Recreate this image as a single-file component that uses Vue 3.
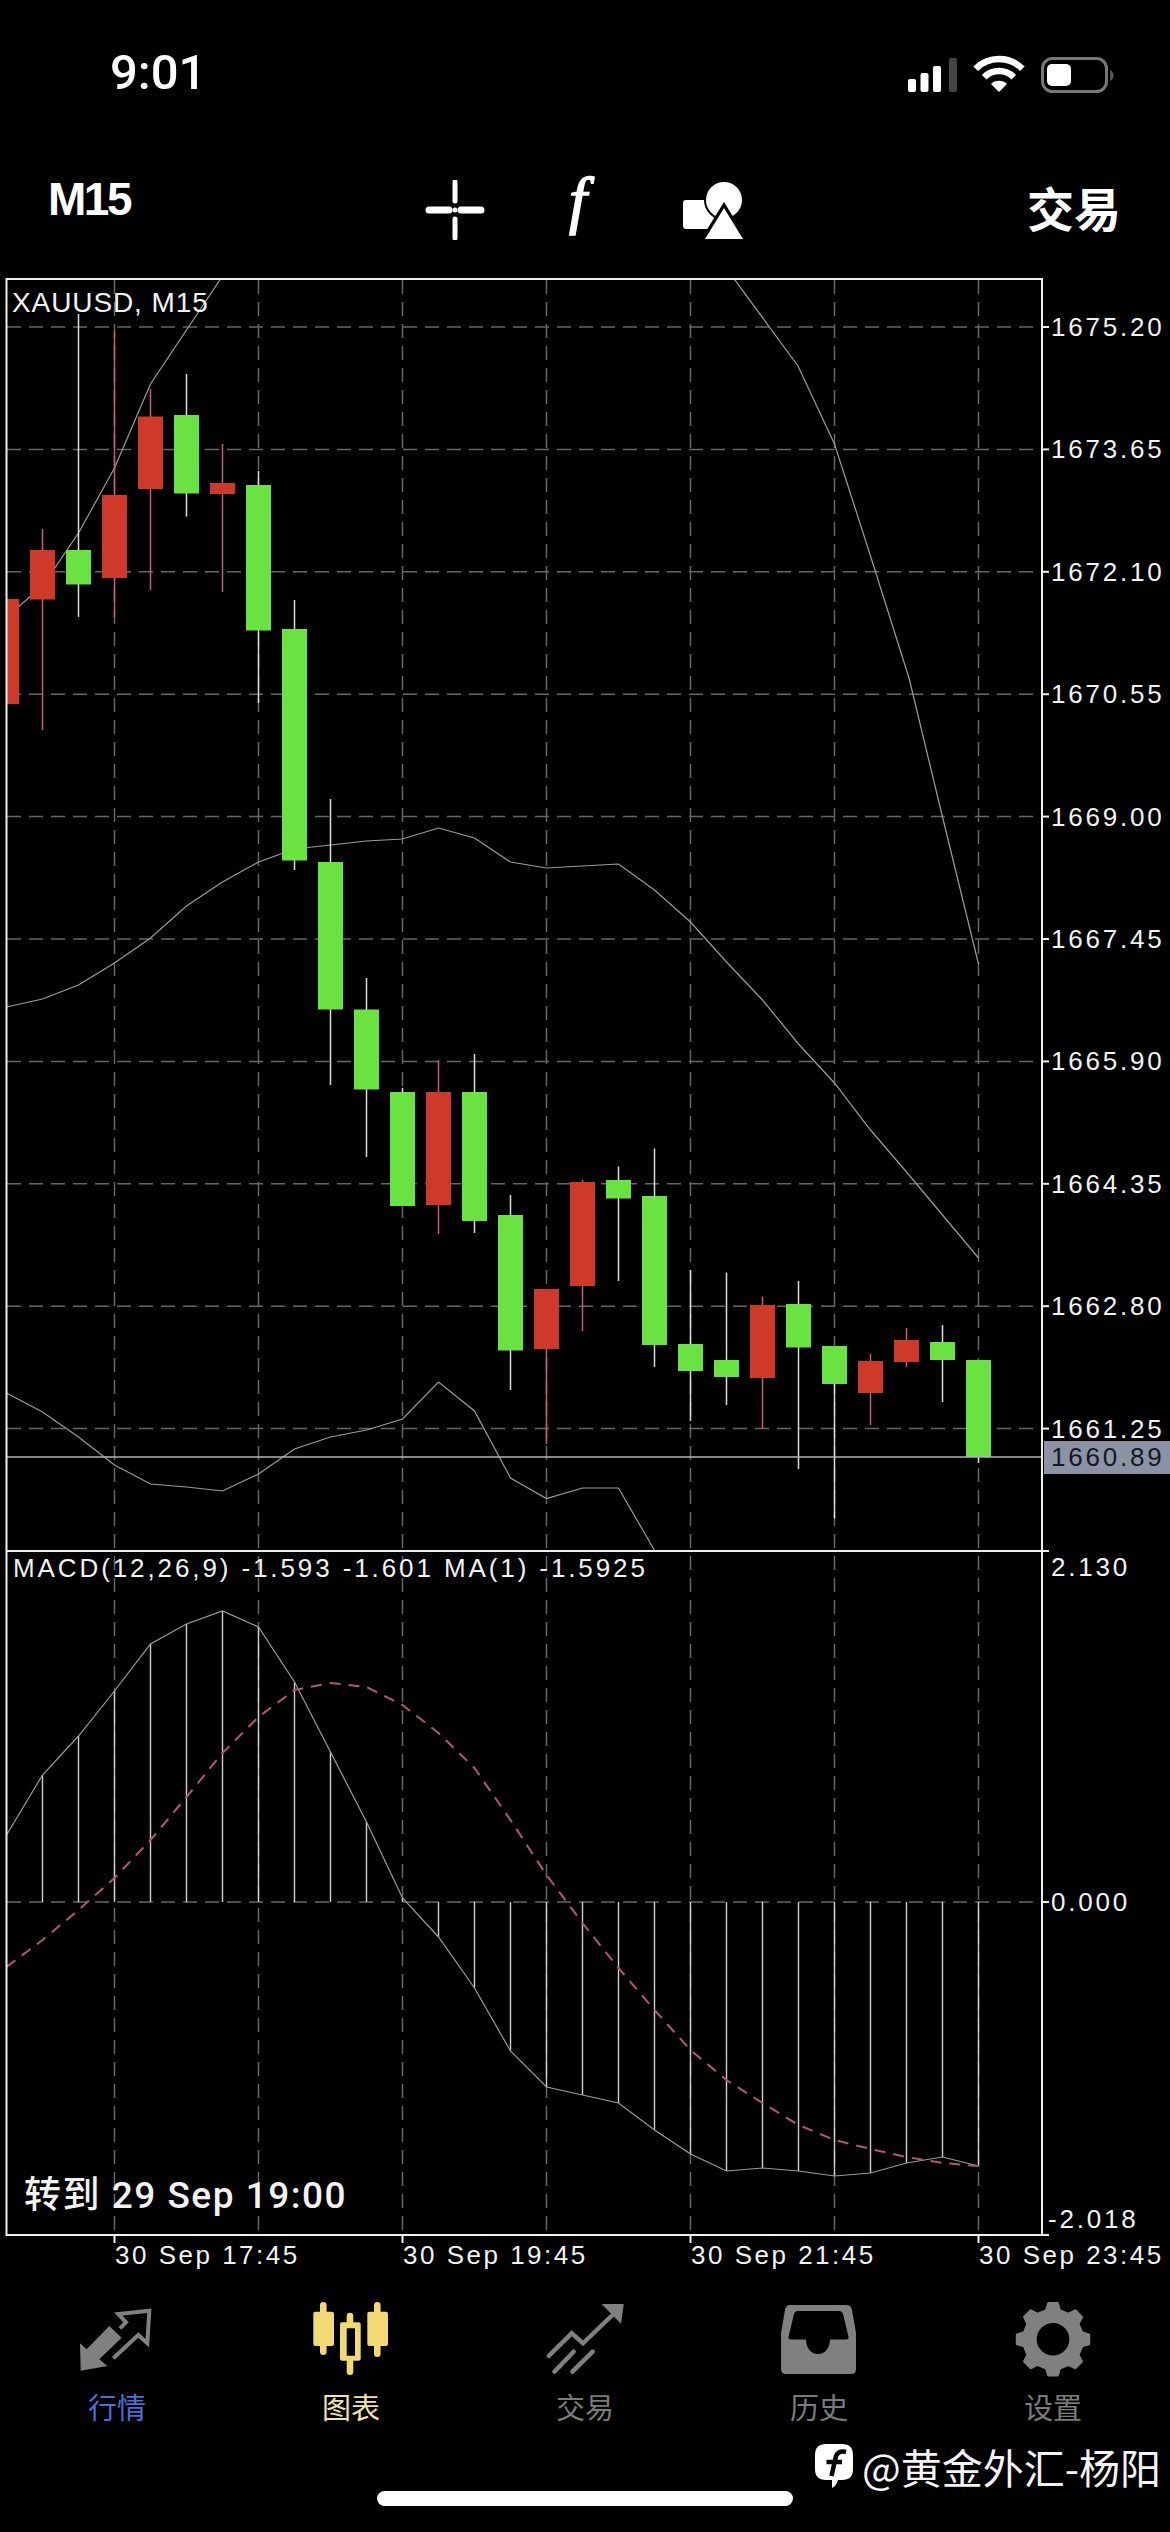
<template>
  <div class="page">
    <header class="status">
      <span class="clock">9:01</span>
      <svg class="status-icons" viewBox="906 54 210 40" width="210" height="40">
        <rect x="908" y="78" width="8" height="13" rx="2" fill="#fff" />
        <rect x="920.5" y="72" width="8" height="19" rx="2" fill="#fff" />
        <rect x="933" y="65" width="8" height="26" rx="2" fill="#fff" />
        <rect x="949" y="57" width="8" height="34" rx="2" fill="#444" />
        <path d="M975.7 67.7A33 33 0 0 1 1022.3 67.7" fill="none" stroke="#fff" stroke-width="6.5" />
        <path d="M984.2 76.2A21 21 0 0 1 1013.8 76.2" fill="none" stroke="#fff" stroke-width="6.5" />
        <path d="M999 91L991 83A11.3 11.3 0 0 1 1007 83Z" fill="#fff" />
        <rect x="1042.5" y="57.5" width="64" height="33" rx="10" fill="none" stroke="#777" stroke-width="3" />
        <rect x="1047" y="63" width="24" height="22" rx="5" fill="#fff" />
        <path d="M1110 69A6 6 0 0 1 1110 80Z" fill="#555" />
      </svg>
    </header>

    <nav class="toolbar">
      <strong class="period">M15</strong>
      <div class="tools">
        <svg viewBox="425 177 60 60" width="60" height="60">
          <path d="M429 207H449M461 207H481" stroke="#fff" stroke-width="7" stroke-linecap="round" />
          <path d="M455 179V198M455 216V235" stroke="#fff" stroke-width="5" stroke-linecap="round" />
          <circle cx="455" cy="207" r="2.5" fill="#fff" />
        </svg>
        <span class="func">f</span>
        <svg viewBox="683 177 62 60" width="62" height="60">
          <rect x="683" y="197" width="36" height="29" rx="3" fill="#fff" />
          <circle cx="724" cy="197" r="19" fill="#fff" stroke="#000" stroke-width="2" />
          <path d="M724 199L750 241H698Z" fill="#000" />
          <path d="M724 205L743 236H705Z" fill="#fff" />
        </svg>
      </div>
      <span class="trade">交易</span>
    </nav>

    <svg class="chart" viewBox="0 270 1170 2026" width="1170" height="2026">
      <defs>
        <clipPath id="upper"><rect x="6" y="279" width="1036" height="1272" /></clipPath>
        <clipPath id="lower"><rect x="6" y="1551" width="1036" height="684" /></clipPath>
      </defs>

      <line v-for="x in gridX" :key="'gx' + x" class="grid" :x1="x" y1="280" :x2="x" y2="2234" />
      <line v-for="row in priceRows" :key="'gy' + row.y" class="grid" x1="7" :y1="row.y" x2="1041" :y2="row.y" />
      <line class="grid" x1="7" y1="1902" x2="1041" y2="1902" />

      <g clip-path="url(#upper)">
        <polyline class="band" :points="upperLeft" />
        <polyline class="band" :points="upperRight" />
        <polyline class="band" :points="midBand" />
        <polyline class="band" :points="lowerBand" />
        <g v-for="c in candleRects" :key="c.x">
          <line :class="c.up ? 'wick-green' : 'wick-red'" :x1="c.x" :y1="c.wickTop" :x2="c.x" :y2="c.wickBottom" />
          <rect :class="c.up ? 'body-green' : 'body-red'" :x="c.x - 12.5" :y="c.top" width="25" :height="c.bottom - c.top" />
        </g>
      </g>
      <line class="price-line" x1="7" y1="1457" x2="1042" y2="1457" />

      <g clip-path="url(#lower)">
        <line v-for="b in histBars" :key="'h' + b.x" class="hist" :x1="b.x" y1="1902" :x2="b.x" :y2="b.y" />
        <polyline class="band" :points="macdLine" />
        <polyline class="signal" :points="signalLine" />
      </g>

      <rect class="frame" x="6.5" y="279" width="1035.5" height="1956" />
      <line class="frame-line" x1="6" y1="1551" x2="1042" y2="1551" />
      <line v-for="x in timeTicks" :key="'t' + x" class="frame-line" :x1="x" y1="2235" :x2="x" y2="2243" />
      <line v-for="y in sideTicks" :key="'s' + y" class="frame-line" x1="1042" :y1="y" x2="1049" :y2="y" />

      <text class="symbol" x="12" y="312">XAUUSD, M15</text>
      <text class="macd-label" x="13" y="1577">MACD(12,26,9) -1.593 -1.601 MA(1) -1.5925</text>
      <text class="goto" x="24" y="2208">转到 29 Sep 19:00</text>

      <text v-for="row in priceRows" :key="row.label" class="axis" x="1051" :y="row.y + 9">{{ row.label }}</text>
      <rect class="price-box" x="1044" y="1441" width="126" height="33" />
      <text class="axis axis-dark" x="1051" y="1466">1660.89</text>
      <text class="axis" x="1051" y="1576">2.130</text>
      <text class="axis" x="1051" y="1911">0.000</text>
      <text class="axis" x="1048" y="2228">-2.018</text>

      <text v-for="t in timeLabels" :key="t.label" class="axis time" :x="t.x" y="2264">{{ t.label }}</text>
    </svg>

    <footer class="tabs">
      <div class="tab">
        <svg viewBox="57 2296 120 88" width="120" height="88">
          <path d="M80 2343.3L86.7 2349.3L109.3 2326L121.7 2337.7L99.3 2359.3L107.3 2366L80.7 2370.7Z" fill="#808080" />
          <path d="M120 2328.3L126 2322.3L118.3 2314L149.3 2310.7L147.3 2343.3L138.3 2335L113.3 2358.3" fill="none" stroke="#808080" stroke-width="4" />
        </svg>
        <span class="tab-label blue">行情</span>
      </div>
      <div class="tab">
        <svg viewBox="291 2296 120 88" width="120" height="88" fill="#f2d974">
          <rect x="320" y="2302" width="6.6" height="53" rx="3.3" />
          <rect x="313.3" y="2311.7" width="20.7" height="34.3" rx="2" />
          <path d="M346.7 2316Q346.7 2312.7 350 2312.7Q353.3 2312.7 353.3 2316V2323H346.7ZM346.7 2360H353.3V2371.7Q353.3 2375 350 2375Q346.7 2375 346.7 2371.7Z" />
          <path fill-rule="evenodd" d="M342 2322.3H358.7Q360.7 2322.3 360.7 2324.3V2358.7Q360.7 2360.7 358.7 2360.7H342Q340 2360.7 340 2358.7V2324.3Q340 2322.3 342 2322.3ZM346.7 2328.3V2355.7H355V2328.3Z" />
          <rect x="374" y="2302" width="6.6" height="55" rx="3.3" />
          <rect x="367.3" y="2311.7" width="20.7" height="34.3" rx="2" />
        </svg>
        <span class="tab-label cream">图表</span>
      </div>
      <div class="tab">
        <svg viewBox="525 2296 120 88" width="120" height="88" fill="none" stroke="#808080" stroke-width="4.5" stroke-linecap="round">
          <path d="M548.7 2356L571.7 2333.3L583 2343.3L617.6 2310" />
          <path d="M554.4 2371.7L573.6 2351.7M572.4 2371.7L592.7 2351.7" />
          <path d="M604 2305H622.6L620.3 2321.7Z" fill="#808080" stroke-linecap="butt" stroke-width="2" />
        </svg>
        <span class="tab-label">交易</span>
      </div>
      <div class="tab">
        <svg viewBox="759 2296 120 88" width="120" height="88">
          <path fill="#808080" fill-rule="evenodd" d="M790 2305L847 2305Q851 2305 852 2310L856 2333L856 2369Q856 2374 851 2374L786 2374Q781 2374 781 2369L781 2333L785 2310Q786 2305 790 2305ZM798 2311Q795 2311 794 2314L788.5 2337Q788 2339.5 791 2339.5L806 2339.5C806 2348 811 2354 818 2354C825 2354 830 2348 830 2339.5L846 2339.5Q849 2339.5 848.5 2337L843 2314Q842 2311 839 2311Z" />
        </svg>
        <span class="tab-label">历史</span>
      </div>
      <div class="tab">
        <svg viewBox="993 2296 120 88" width="120" height="88">
          <path :d="gearPath" fill="#808080" stroke="#808080" stroke-width="3" stroke-linejoin="round" />
          <circle cx="1053" cy="2339.3" r="16.3" fill="#000" />
        </svg>
        <span class="tab-label">设置</span>
      </div>
    </footer>

    <div class="watermark">
      <svg viewBox="815 2446 40 48" width="40" height="48">
        <path d="M826 2448H842Q853 2448 853 2459V2473Q853 2484 842 2484H838Q837 2489 832 2492L832 2484H826Q815 2484 815 2473V2459Q815 2448 826 2448Z" fill="#fff" />
        <path d="M846 2456Q837 2454 835.5 2462L831.5 2480M826.5 2466H842" fill="none" stroke="#000" stroke-width="4.5" />
      </svg>
      <span>@黄金外汇-杨阳</span>
    </div>

    <div class="home-bar"></div>
  </div>
</template>

<script setup>
const gridX = [114.5, 258.5, 402.5, 546.5, 690.5, 834.5, 978.5];
const timeTicks = [114.5, 402.5, 690.5, 978.5];

const priceLabels = ['1675.20', '1673.65', '1672.10', '1670.55', '1669.00', '1667.45', '1665.90', '1664.35', '1662.80', '1661.25'];
const priceRows = priceLabels.map((label, i) => ({ label, y: 327 + 122.4 * i }));
const sideTicks = [...priceRows.map((r) => r.y), 1551, 1902, 2235];

const timeLabels = [
  { label: '30 Sep 17:45', x: 115 },
  { label: '30 Sep 19:45', x: 403 },
  { label: '30 Sep 21:45', x: 691 },
  { label: '30 Sep 23:45', x: 979 },
];

// up, body top, body bottom, wick top, wick bottom; one candle every 36px
const candles = [
  [0, 599, 704, 599, 704],
  [0, 550, 599.5, 529, 730],
  [1, 550, 584.5, 314, 617],
  [0, 495, 578, 331, 617],
  [0, 416.5, 489, 389, 590],
  [1, 415, 493.5, 374, 516.5],
  [0, 483, 494, 444, 592],
  [1, 485, 630.5, 471, 703],
  [1, 629, 860.5, 600, 870],
  [1, 862, 1009.5, 799, 1085],
  [1, 1009.5, 1089.5, 978, 1157],
  [1, 1092, 1206, 1088, 1206],
  [0, 1092, 1205, 1060, 1234],
  [1, 1092, 1221, 1054, 1233],
  [1, 1215, 1350.5, 1195, 1390],
  [0, 1289, 1349, 1289, 1444],
  [0, 1182, 1286, 1180, 1331],
  [1, 1180, 1198.5, 1166.5, 1281],
  [1, 1196, 1345, 1148.5, 1367],
  [1, 1344, 1371, 1270, 1421],
  [1, 1360, 1377, 1272.5, 1405],
  [0, 1305, 1378, 1296.5, 1428.5],
  [1, 1304, 1347.5, 1281, 1469],
  [1, 1346, 1384, 1346, 1518.5],
  [0, 1361, 1393, 1354, 1425],
  [0, 1340, 1362, 1328, 1367],
  [1, 1342, 1360, 1325, 1402],
  [1, 1360, 1457, 1360, 1463],
];
const candleX = (i) => 6.5 + 36 * i;
const candleRects = candles.map(([up, top, bottom, wickTop, wickBottom], i) => ({
  x: candleX(i), up: up === 1, top, bottom, wickTop, wickBottom,
}));

const upperLeft = '6.5,617 42.5,586 78.5,533 114.5,468 150.5,384 186.5,330 222.5,276';
const upperRight = '732,276 798,366 834.5,444 870.5,556 909,678 942.5,817 978.5,964';
const midBand = '6.5,1007 42.5,999 78.5,985 114.5,963 150.5,938 186.5,906 222.5,882 258.5,862 294.5,849 330.5,845 366.5,841 402.5,839 438.5,828 474.5,838 510.5,862 546.5,868 582.5,866 618.5,864 654.5,890 690.5,922 726.5,962 762.5,1000 798.5,1044 834.5,1083 870.5,1130 906.5,1172 942.5,1215 978.5,1258';
const lowerBand = '6.5,1393 42.5,1412 78.5,1437 114.5,1465 150.5,1484 186.5,1487 222.5,1491 258.5,1474 294.5,1449 330.5,1437 366.5,1430 402.5,1419 438.5,1382 474.5,1411 510.5,1478 546.5,1498.5 582.5,1488 618.5,1488 656,1553';

const macdY = [1835, 1775, 1736, 1691, 1644, 1624, 1611, 1627, 1682, 1752, 1822, 1898, 1937, 1988, 2051, 2087, 2095, 2103, 2130, 2154, 2171, 2168, 2171, 2176, 2173, 2163, 2157, 2166];
const histBars = macdY.map((y, i) => ({ x: candleX(i), y })).slice(1);
const macdLine = macdY.map((y, i) => `${candleX(i)},${y}`).join(' ');
const signalY = [1967, 1940, 1910, 1878, 1840, 1797, 1753, 1717, 1690, 1683, 1687, 1705, 1733, 1768, 1820, 1875, 1923, 1968, 2010, 2050, 2080, 2103, 2125, 2140, 2149, 2157, 2163, 2166];
const signalLine = signalY.map((y, i) => `${candleX(i)},${y}`).join(' ');

// eight rounded teeth round the centre of the settings tab
const gearPath = (() => {
  const pts = [];
  for (let i = 0; i < 8; i++) {
    const a = (i * Math.PI) / 4 - Math.PI / 2;
    [[-13, 29.5], [-7, 36], [7, 36], [13, 29.5]].forEach(([deg, r]) => {
      const t = a + (deg * Math.PI) / 180;
      pts.push(`${(1053 + r * Math.cos(t)).toFixed(1)} ${(2339.3 + r * Math.sin(t)).toFixed(1)}`);
    });
  }
  return `M${pts.join('L')}Z`;
})();
</script>

<style>
html, body { background: #000; }
</style>

<style scoped>
.page {
  position: relative;
  width: 1170px;
  height: 2532px;
  overflow: hidden;
  background: #000;
  color: #fff;
  font-family: "Liberation Sans", "Noto Sans CJK SC", sans-serif;
}

.status {
  height: 150px;
  display: flex;
  align-items: center;
  justify-content: space-between;
  padding: 0 54px 0 110px;
  box-sizing: border-box;
}
.clock { margin-bottom: 6px; font-family: Roboto, sans-serif; font-weight: 500; font-size: 49px; }
.status-icons { display: block; }

.toolbar {
  height: 120px;
  display: flex;
  align-items: center;
}
.period {
  width: 425px;
  flex: none;
  box-sizing: border-box;
  padding: 0 0 22px 48px;
  font-size: 46px;
  letter-spacing: -2.5px;
}
.tools {
  display: flex;
  align-items: center;
  width: 320px;
}
.tools svg { display: block; flex: none; }
.func {
  width: 198px;
  margin-bottom: 20px;
  padding-left: 84px;
  box-sizing: border-box;
  font-family: "Liberation Serif", serif;
  font-style: italic;
  font-size: 64px;
  line-height: 60px;
  -webkit-text-stroke: 1.5px #fff;
}
.trade {
  margin-left: auto;
  padding: 0 49px 8px 0;
  font-family: "Noto Sans CJK SC", sans-serif;
  font-weight: 700;
  font-size: 47px;
}

.chart { display: block; }
.grid { stroke: #666; stroke-width: 1.5; stroke-dasharray: 14 8; }
.band { fill: none; stroke: #9c9c9c; stroke-width: 1.2; }
.body-green { fill: #6ae242; }
.body-red { fill: #cd3a2a; }
.wick-green { stroke: #dcdcdc; stroke-width: 1.5; }
.wick-red { stroke: #c4606a; stroke-width: 1.5; }
.price-line { stroke: #b4b4b4; stroke-width: 1.5; }
.hist { stroke: #cfcfcf; stroke-width: 1.4; }
.signal { fill: none; stroke: #b05a6c; stroke-width: 2; stroke-dasharray: 11 8; }
.frame { fill: none; stroke: #f0f0f0; stroke-width: 2; }
.frame-line { stroke: #f0f0f0; stroke-width: 2; }
.price-box { fill: #8c93a5; }

.chart text { fill: #f2f2f2; font-family: "Liberation Sans", "Noto Sans CJK SC", sans-serif; }
.axis { font-size: 26px; letter-spacing: 2.8px; }
.time { letter-spacing: 2.5px; }
.chart .axis-dark { fill: #15181f; }
.symbol { font-size: 28px; letter-spacing: 0.9px; }
.macd-label { font-size: 26px; letter-spacing: 2.9px; }
.chart .goto { font-family: Roboto, "Noto Sans CJK SC", sans-serif; font-weight: 500; font-size: 37px; letter-spacing: 1.5px; }

.tabs {
  display: grid;
  grid-template-columns: repeat(5, 234px);
}
.tab {
  display: flex;
  flex-direction: column;
  align-items: center;
}
.tab svg { display: block; }
.tab-label {
  margin-top: 4px;
  font-family: "Noto Sans CJK SC", sans-serif;
  font-size: 29px;
  line-height: 36px;
  color: #7b7b7b;
}
.blue { color: #4a6fd6; }
.cream { color: #f0e3ad; }

.watermark {
  position: absolute;
  left: 815px;
  top: 2442px;
  display: flex;
  align-items: center;
  gap: 7px;
  font-family: "Noto Sans CJK SC", sans-serif;
  font-size: 41px;
  line-height: 48px;
  color: #f4f4f4;
  white-space: nowrap;
}
.watermark svg { display: block; }

.home-bar {
  width: 416px;
  height: 15px;
  margin: 67px auto 0;
  border-radius: 8px;
  background: #fff;
}
</style>
